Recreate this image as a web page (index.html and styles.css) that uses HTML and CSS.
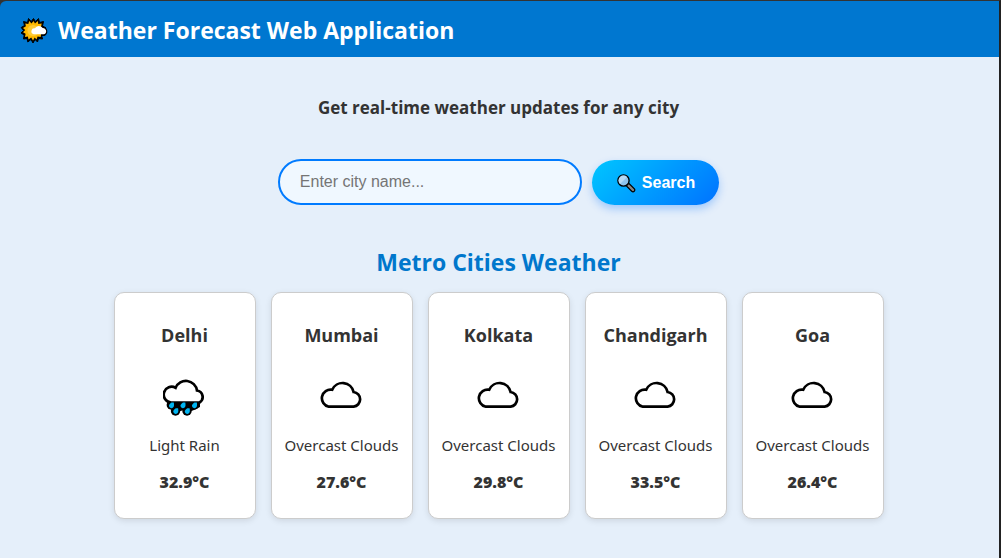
FILE: index.html
```html
<!DOCTYPE html>
<html lang="en">
<head>
<meta charset="utf-8">
<title>Weather Forecast Web Application</title>
<link rel="stylesheet" href="styles.css">
</head>
<body>
<svg class="sprite" aria-hidden="true">
  <symbol id="cloud" viewBox="0 0 44 40">
    <path d="M8.800 29.700H33.600A7.400 7.400 0 0 0 33.600 15A11.300 11.300 0 0 0 12.200 12.800A8.600 8.600 0 1 0 8.800 29.700Z" fill="#fff" stroke="#000" stroke-width="2.700"/>
  </symbol>
  <symbol id="rain" viewBox="0 0 44 40">
    <path d="M3.500 25H37V30L31 33L26 35L21 33L14 35L8 31Z" fill="#000"/>
    <g fill="#000">
      <circle cx="8.300" cy="28" r="4.700"/>
      <circle cx="19.800" cy="28" r="4.700"/>
      <circle cx="31.300" cy="28" r="4.700"/>
      <circle cx="12.500" cy="34" r="4.700"/>
      <circle cx="24" cy="34" r="4.700"/>
    </g>
    <path d="M8 25.500A7.900 7.900 0 1 1 12.600 10.800A11.200 11.200 0 0 1 34 13.500A6.500 6.500 0 0 1 36.500 25.500Z" fill="#fff" stroke="#000" stroke-width="2.700"/>
    <g fill="#00b4f0">
      <path id="drop" d="M10.800 25.500H8.500C6.500 26.800 5.800 28 6 29.300A2.500 2.500 0 0 0 10.700 29.700C11.300 28.500 11 27 10.800 25.500Z"/>
      <use href="#drop" x="11.500"/>
      <use href="#drop" x="23"/>
      <use href="#drop" x="4.300" y="5.800"/>
      <use href="#drop" x="15.800" y="5.800"/>
    </g>
  </symbol>
</svg>
<div class="page">
  <header class="header">
    <svg class="logo" viewBox="0 0 28 28" aria-hidden="true">
      <path d="M13.500 2.500L15.500 5.500L18.500 2.500L19.500 6.500L23.500 5.500L22.500 10L26 12L23 14L24.500 18L21.500 19L22.500 23L18.500 22.500L17.500 26L15 23.500L13 27L11 23.500L7.800 26L7 22.500L3.500 23L4.200 19L1 17L3.500 14.500L1.200 11.500L4.500 9.500L3.500 5.500L7.500 6.500L8.500 2.500L11.200 5.500Z" fill="#000" stroke="#000" stroke-width="1"/>
      <path d="M14 19A3.500 3.500 0 0 1 15 12A5 5 0 0 1 23 11.500A4 4 0 0 1 24 19Z" fill="#000" stroke="#000" stroke-width="2.200"/>
      <path d="M13.500 5L15 7.600L17.800 5L18.300 8L21.700 7.500L21 10.700L22.500 14L21 18.500L20.700 21L17.600 20.600L16.500 23.500L14.700 21.600L13 24.600L11.200 21.600L8.500 23.500L7.900 20.600L5 21L5.600 17.800L3 16.200L5.200 14L3 12L5.900 10.300L5.300 7.500L8.300 8L9.200 5L11.500 7.400Z" fill="#ffb900"/>
      <circle cx="13" cy="14.500" r="5.500" fill="#ffcb35"/>
      <path d="M13.800 18.200A3 3 0 0 1 15 12.300A4.400 4.400 0 0 1 22.600 12A3.200 3.200 0 0 1 24 18.200Z" fill="#fff"/>
    </svg>
    <h1 class="brand">Weather Forecast Web Application</h1>
  </header>
  <main class="main">
    <p class="tagline">Get real-time weather updates for any city</p>
    <form class="search">
      <input class="search-input" type="text" placeholder="Enter city name..." aria-label="City name">
      <button class="search-button" type="button">
        <svg class="lens" viewBox="0 0 20 20" aria-hidden="true">
          <path d="M12 12L17 17" stroke="#000" stroke-width="4.600" stroke-linecap="round"/>
          <path d="M12.500 12.500L17 17" stroke="#858585" stroke-width="2.400" stroke-linecap="round"/>
          <circle cx="7.500" cy="7.500" r="5.600" fill="#8fc3ec" stroke="#000" stroke-width="1.400"/>
          <path d="M4 11A4.900 4.900 0 0 1 11 4Z" fill="#b7d9f4"/>
        </svg>
        <span>Search</span>
      </button>
    </form>
    <h2 class="section-title">Metro Cities Weather</h2>
    <section class="cards">
      <article class="card">
        <h3 class="city">Delhi</h3>
        <svg class="icon" aria-hidden="true"><use href="#rain"/></svg>
        <p class="condition">Light Rain</p>
        <p class="temp">32.9°C</p>
      </article>
      <article class="card">
        <h3 class="city">Mumbai</h3>
        <svg class="icon" aria-hidden="true"><use href="#cloud"/></svg>
        <p class="condition">Overcast Clouds</p>
        <p class="temp">27.6°C</p>
      </article>
      <article class="card">
        <h3 class="city">Kolkata</h3>
        <svg class="icon" aria-hidden="true"><use href="#cloud"/></svg>
        <p class="condition">Overcast Clouds</p>
        <p class="temp">29.8°C</p>
      </article>
      <article class="card">
        <h3 class="city">Chandigarh</h3>
        <svg class="icon" aria-hidden="true"><use href="#cloud"/></svg>
        <p class="condition">Overcast Clouds</p>
        <p class="temp">33.5°C</p>
      </article>
      <article class="card">
        <h3 class="city">Goa</h3>
        <svg class="icon" aria-hidden="true"><use href="#cloud"/></svg>
        <p class="condition">Overcast Clouds</p>
        <p class="temp">26.4°C</p>
      </article>
    </section>
  </main>
</div>
</body>
</html>
```
FILE: styles.css
```css
* {
  box-sizing: border-box;
}

body {
  margin: 0;
  background: #333;
  color: #333;
  font-family: "Segoe UI", "Open Sans", "Noto Sans", sans-serif;
  font-size: 15px;
}

h1, h2, h3, p {
  margin: 0;
}

.sprite {
  position: absolute;
  width: 0;
  height: 0;
}

.page {
  min-height: 100vh;
  border-top: 1px solid #333;
  border-right: 2px solid #222;
  background: #333;
}

.header {
  display: flex;
  align-items: center;
  gap: 10px;
  padding: 13px 20px 11px;
  border-top-left-radius: 6px;
  background: #0077d0;
  color: #fff;
}

.logo {
  width: 28px;
  height: 28px;
}

.brand {
  font-size: 23px;
  font-weight: 700;
  line-height: 32px;
}

.main {
  display: flex;
  flex-direction: column;
  align-items: center;
  min-height: calc(100vh - 57px);
  padding: 39px 22px 39px 20px;
  background: #e5effa;
}

.tagline {
  font-size: 17px;
  font-weight: 700;
  line-height: 24px;
}

.search {
  display: flex;
  align-items: flex-end;
  gap: 10px;
  margin-top: 39px;
}

.search-input {
  width: 304px;
  height: 46px;
  padding: 0 20px;
  border: 2px solid #007bff;
  border-radius: 23px;
  background: #f0f8ff;
  font-family: Arial, "Liberation Sans", sans-serif;
  font-size: 16px;
}

.search-input::placeholder {
  color: #757575;
}

.search-button {
  display: flex;
  align-items: center;
  gap: 6px;
  height: 45px;
  padding: 1px 24px 0;
  border: 0;
  border-radius: 23px;
  background: linear-gradient(135deg, #00c6ff, #0072ff);
  box-shadow: 0 4px 8px rgba(0, 114, 255, 0.3);
  color: #fff;
  font-family: Arial, "Liberation Sans", sans-serif;
  font-size: 16px;
  font-weight: 700;
}

.lens {
  width: 20px;
  height: 20px;
}

.section-title {
  margin-top: 41px;
  color: #0077cc;
  font-size: 23px;
  font-weight: 700;
  line-height: 32px;
}

.cards {
  display: flex;
  flex-wrap: wrap;
  justify-content: center;
  gap: 15px;
  margin-top: 14px;
}

.card {
  display: flex;
  flex-direction: column;
  align-items: center;
  width: 142px;
  padding: 30px 8px 24px;
  border: 1px solid #ccc;
  border-radius: 10px;
  background: #fff;
  box-shadow: 0 2px 6px rgba(0, 0, 0, 0.1);
}

.city {
  font-size: 18px;
  font-weight: 700;
  line-height: 24px;
}

.icon {
  width: 44px;
  height: 40px;
  margin-top: 30px;
}

.condition {
  margin-top: 16px;
  font-family: "Segoe UI", "Noto Sans", sans-serif;
  line-height: 24px;
  white-space: nowrap;
}

.temp {
  margin-top: 13px;
  font-size: 16px;
  font-weight: 800;
  line-height: 24px;
}
```
